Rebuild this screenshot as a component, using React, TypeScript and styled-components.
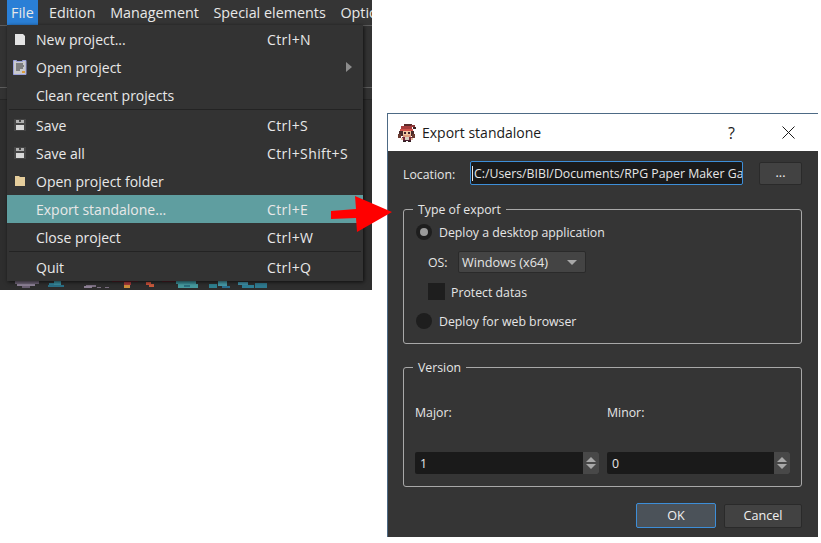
import * as React from "react";
import styled, { createGlobalStyle } from "styled-components";

const GlobalStyle = createGlobalStyle`
  html, body {
    margin: 0;
    padding: 0;
    background: #ffffff;
  }
  body {
    font-family: "Open Sans", "Noto Sans", sans-serif;
    font-size: 13.5px;
    color: #e6e6e6;
  }
`;

const menuBarItems = ["File", "Edition", "Management", "Special elements", "Options"];

type MenuEntry = {
  label?: string;
  shortcut?: string;
  icon?: "new" | "open" | "save" | "folder";
  submenu?: boolean;
  active?: boolean;
  separator?: boolean;
};

const menuEntries: MenuEntry[] = [
  { label: "New project...", shortcut: "Ctrl+N", icon: "new" },
  { label: "Open project", icon: "open", submenu: true },
  { label: "Clean recent projects" },
  { separator: true },
  { label: "Save", shortcut: "Ctrl+S", icon: "save" },
  { label: "Save all", shortcut: "Ctrl+Shift+S", icon: "save" },
  { label: "Open project folder", icon: "folder" },
  { label: "Export standalone...", shortcut: "Ctrl+E", active: true },
  { label: "Close project", shortcut: "Ctrl+W" },
  { separator: true },
  { label: "Quit", shortcut: "Ctrl+Q" },
];

// blurred map tiles peeking out under the menu: [x, y, w, h, colour]
const tiles: [number, number, number, number, string][] = [
  [3, 0, 24, 3, "#6f6477"], [5, 3, 18, 2, "#8d8095"], [10, 5, 8, 2, "#6a5f72"],
  [37, 2, 6, 2, "#2f7f96"], [42, 0, 7, 5, "#3a8fa0"], [36, 4, 16, 2, "#2a6f86"],
  [74, 4, 10, 2, "#7a6e80"], [72, 5, 8, 2, "#8d8095"], [85, 6, 4, 1, "#7a6e80"],
  [93, 6, 4, 1, "#7a6e80"], [100, 0, 26, 1, "#4f1c24"], [112, 1, 7, 3, "#a8383a"],
  [112, 4, 6, 3, "#cf8f3c"], [134, 1, 5, 3, "#c9503a"], [137, 3, 5, 3, "#c85a3c"],
  [150, 0, 16, 1, "#4f1c24"], [164, 0, 20, 3, "#3b8f98"], [166, 3, 20, 4, "#469a9e"],
  [172, 4, 6, 2, "#2a6f7f"], [197, 3, 8, 4, "#2f7f8f"], [206, 0, 9, 5, "#469aa8"],
  [210, 5, 8, 2, "#2a6f8f"], [226, 1, 10, 3, "#3f8fa5"], [230, 4, 12, 3, "#2f7f96"],
  [243, 2, 12, 5, "#2f7a90"],
];

// little character used as the window icon: [x, y, w, h, colour]
const sprite: [number, number, number, number, string][] = [
  [6, 0, 8, 2, "#5a2a2a"], [13, 1, 4, 2, "#8a3a3a"], [15, 3, 3, 2, "#3a2020"],
  [3, 2, 11, 3, "#a83c3c"], [2, 5, 13, 2, "#d0524a"], [1, 7, 4, 5, "#4a2a2a"],
  [13, 7, 3, 5, "#4a2a2a"], [5, 7, 8, 4, "#f0c6a0"], [6, 8, 2, 2, "#40202a"],
  [10, 8, 2, 2, "#40202a"], [0, 10, 3, 4, "#6a3a30"], [14, 10, 3, 4, "#6a3a30"],
  [5, 11, 8, 2, "#e0a080"], [4, 13, 10, 3, "#7a2a3a"], [7, 13, 4, 3, "#d8d0c0"],
  [3, 14, 2, 2, "#e8c0a0"], [13, 14, 2, 2, "#e8c0a0"], [5, 16, 8, 1, "#4a2030"],
  [5, 17, 3, 1, "#302020"], [10, 17, 3, 1, "#302020"],
];

const MenuIcon: React.FC<{ name: MenuEntry["icon"] }> = ({ name }) => {
  if (name === "new") {
    return (
      <svg width="10" height="11" viewBox="0 0 10 11">
        <path d="M0 0h8l2 2v9H0z" fill="#e4e4e4" />
      </svg>
    );
  }
  if (name === "open") {
    return (
      <svg width="14" height="15" viewBox="0 0 14 15">
        <path d="M.5.5h3v1h6v-1h3.5v14H.5z" fill="#c9c9cc" stroke="#9aa0dc" />
        <path d="M3 4h7M3 6h8M3 8h7M3 10h4" stroke="#333" />
        <rect x="9" y="11" width="3" height="2" fill="#d99a3c" />
      </svg>
    );
  }
  if (name === "save") {
    return (
      <svg width="12" height="12" viewBox="0 0 12 12">
        <rect width="12" height="12" fill="#464646" />
        <rect x="2" y="1" width="8" height="3" fill="#b0b0b0" />
        <rect x="5" y="1" width="2" height="2" fill="#464646" />
        <rect x="2" y="6" width="8" height="5" fill="#d8d8d8" />
      </svg>
    );
  }
  if (name === "folder") {
    return (
      <svg width="10" height="10" viewBox="0 0 10 10">
        <path d="M0 0h4l1 1h5v9H0z" fill="#e5cd9b" />
      </svg>
    );
  }
  return null;
};

const App: React.FC = () => {
  return (
    <>
      <GlobalStyle />
      <Page>
        <EditorShot>
          <MenuBar>
            {menuBarItems.map((item, i) => (
              <MenuBarItem key={item} $open={i === 0}>
                {item}
              </MenuBarItem>
            ))}
          </MenuBar>
          <ToolStrip />
          <TabStrip />
          <MapArea>
            <svg width="260" height="9" viewBox="0 0 260 9">
              {tiles.map(([x, y, w, h, c], i) => (
                <rect key={i} x={x} y={y} width={w} height={h} fill={c} />
              ))}
            </svg>
          </MapArea>
          <FileMenu>
            {menuEntries.map((entry, i) =>
              entry.separator ? (
                <MenuSeparator key={i} />
              ) : (
                <MenuRow key={i} $active={entry.active}>
                  <IconCell>
                    <MenuIcon name={entry.icon} />
                  </IconCell>
                  <RowLabel>{entry.label}</RowLabel>
                  <Shortcut>{entry.shortcut}</Shortcut>
                  {entry.submenu && <SubmenuArrow />}
                </MenuRow>
              )
            )}
          </FileMenu>
        </EditorShot>

        <PointerArrow width="62" height="37" viewBox="0 0 62 37">
          <path d="M0 15 L25 13 L24 0 L61 16 L26 36 L25 22 L0 23 Z" fill="#ff0000" />
        </PointerArrow>

        <Dialog>
          <TitleBar>
            <svg width="18" height="18" viewBox="0 0 18 18">
              {sprite.map(([x, y, w, h, c], i) => (
                <rect key={i} x={x} y={y} width={w} height={h} fill={c} />
              ))}
            </svg>
            <TitleText>Export standalone</TitleText>
            <HelpMark>?</HelpMark>
            <svg width="13" height="13" viewBox="0 0 13 13">
              <path d="M.5.5l12 12M12.5.5l-12 12" stroke="#1a1a1a" fill="none" />
            </svg>
          </TitleBar>
          <DialogBody>
            <LocationRow>
              <LocationLabel>Location:</LocationLabel>
              <PathField>
                <Caret />
                C:/Users/BIBI/Documents/RPG Paper Maker Ga
              </PathField>
              <PushButton $w={43} $h={23}>
                ...
              </PushButton>
            </LocationRow>

            <Group $h={135} $mt={24}>
              <GroupTitle>Type of export</GroupTitle>
              <OptionRow $mt={13}>
                <Radio $checked />
                <span>Deploy a desktop application</span>
              </OptionRow>
              <OsRow>
                <OsLabel>OS:</OsLabel>
                <SelectBox>
                  Windows (x64)
                  <SelectCaret />
                </SelectBox>
              </OsRow>
              <CheckRow>
                <CheckBox />
                <CheckLabel>Protect datas</CheckLabel>
              </CheckRow>
              <OptionRow $mt={12}>
                <Radio />
                <span>Deploy for web browser</span>
              </OptionRow>
            </Group>

            <Group $h={120} $mt={23}>
              <GroupTitle>Version</GroupTitle>
              <VersionGrid>
                <VersionColumn>
                  <span>Major:</span>
                  <SpinBox>
                    <SpinValue>1</SpinValue>
                    <SpinButtons>
                      <SpinUp />
                      <SpinDown />
                    </SpinButtons>
                  </SpinBox>
                </VersionColumn>
                <VersionColumn>
                  <span>Minor:</span>
                  <SpinBox>
                    <SpinValue>0</SpinValue>
                    <SpinButtons>
                      <SpinUp />
                      <SpinDown />
                    </SpinButtons>
                  </SpinBox>
                </VersionColumn>
              </VersionGrid>
            </Group>

            <ButtonRow>
              <PushButton $w={80} $h={25} $primary>
                OK
              </PushButton>
              <PushButton $w={78} $h={24}>
                Cancel
              </PushButton>
            </ButtonRow>
          </DialogBody>
        </Dialog>
      </Page>
    </>
  );
};

const Page = styled.div`
  position: relative;
  display: flex;
  align-items: flex-start;
  gap: 15px;
  width: 821px;
  height: 543px;
  overflow: hidden;
`;

const EditorShot = styled.div`
  position: relative;
  display: flex;
  flex-direction: column;
  flex: none;
  width: 372px;
  height: 290px;
  background: #333333;
  overflow: hidden;
`;

const MenuBar = styled.div`
  display: flex;
  flex: none;
  height: 25px;
  padding-left: 7px;
  background: #353535;
  white-space: nowrap;
`;

const MenuBarItem = styled.div<{ $open?: boolean }>`
  display: flex;
  align-items: center;
  padding: 0 ${(p) => (p.$open ? "4px" : "7.3px")};
  margin-right: ${(p) => (p.$open ? "4px" : "0")};
  background: ${(p) => (p.$open ? "#2a7fd6" : "transparent")};
  color: #e8e8e8;
  font-size: 14.35px;
`;

const ToolStrip = styled.div`
  flex: none;
  height: 61px;
  background: #333333;
  border-top: 1px solid #5c5c5c;
  border-bottom: 1px solid #5c5c5c;
`;

const TabStrip = styled.div`
  flex: none;
  height: 11px;
  background: #333333;
  border-bottom: 1px solid #262626;
`;

const MapArea = styled.div`
  display: flex;
  flex: 1;
  align-items: flex-end;
  padding-left: 12px;
  background: #2e2e2e;
`;

const FileMenu = styled.div`
  position: absolute;
  left: 7px;
  top: 25px;
  width: 356px;
  background: #333333;
  box-shadow: 1px 1px 4px rgba(0, 0, 0, 0.7);
`;

const MenuRow = styled.div<{ $active?: boolean }>`
  position: relative;
  display: grid;
  grid-template-columns: 29px 231px 1fr;
  align-items: center;
  height: 28px;
  background: ${(p) => (p.$active ? "#5f9ea0" : "transparent")};
  font-size: 14px;
  color: #e8e8e8;
`;

const IconCell = styled.div`
  display: flex;
  align-items: center;
  justify-content: center;
  width: 16px;
  height: 28px;
  margin-left: 5px;
`;

const RowLabel = styled.span`
  white-space: nowrap;
`;

const Shortcut = styled.span`
  letter-spacing: 0.4px;
  white-space: nowrap;
`;

const SubmenuArrow = styled.i`
  position: absolute;
  right: 11px;
  top: 9px;
  border-left: 6px solid #8c8c8c;
  border-top: 5px solid transparent;
  border-bottom: 5px solid transparent;
`;

const MenuSeparator = styled.div`
  height: 1px;
  margin: 0 2px 1px;
  background: #232323;
`;

const PointerArrow = styled.svg`
  position: absolute;
  left: 331px;
  top: 196px;
`;

const Dialog = styled.div`
  display: flex;
  flex-direction: column;
  flex: none;
  width: 431px;
  height: 424px;
  margin-top: 113px;
  background: #353535;
  border-left: 1px solid #4d6a85;
  border-top: 1px solid #4d6a85;
  box-sizing: border-box;
`;

const TitleBar = styled.div`
  display: flex;
  align-items: center;
  flex: none;
  height: 37px;
  padding: 0 23px 0 10px;
  background: #ffffff;
  color: #1a1a1a;
`;

const TitleText = styled.span`
  flex: 1;
  margin-left: 6px;
  font-size: 14px;
`;

const HelpMark = styled.span`
  margin-right: 47px;
  font-size: 16px;
`;

const DialogBody = styled.div`
  display: flex;
  flex-direction: column;
  flex: 1;
  padding: 10px 16px 0 15px;
  font-size: 12.3px;
`;

const LocationRow = styled.div`
  display: flex;
  align-items: center;
  height: 24px;
`;

const LocationLabel = styled.span`
  width: 67px;
  padding-top: 2px;
`;

const PathField = styled.div`
  display: flex;
  align-items: center;
  box-sizing: border-box;
  width: 273px;
  height: 24px;
  margin-right: 16px;
  padding-left: 1px;
  background: #1a1a1a;
  border: 1px solid #3d8ed8;
  border-radius: 2px;
  white-space: nowrap;
  overflow: hidden;
  font-size: 12.3px;
`;

const Caret = styled.i`
  flex: none;
  width: 1px;
  height: 15px;
  margin-right: 1px;
  background: #e6e6e6;
`;

const PushButton = styled.div<{ $w: number; $h: number; $primary?: boolean }>`
  display: flex;
  align-items: center;
  justify-content: center;
  box-sizing: border-box;
  width: ${(p) => p.$w}px;
  height: ${(p) => p.$h}px;
  padding-bottom: 1px;
  background: ${(p) => (p.$primary ? "#4b5259" : "#424242")};
  border: 1px solid ${(p) => (p.$primary ? "#3d8ed8" : "#2a2a2a")};
  border-radius: 2px;
  color: #f0f0f0;
  font-size: 12.6px;
`;

const Group = styled.div<{ $h: number; $mt: number }>`
  position: relative;
  box-sizing: border-box;
  height: ${(p) => p.$h}px;
  margin-top: ${(p) => p.$mt}px;
  border: 1px solid #a8a8a8;
  border-radius: 3px;
`;

const GroupTitle = styled.span`
  position: absolute;
  left: 9px;
  top: -9px;
  padding: 0 5px;
  background: #353535;
  line-height: 18px;
`;

const OptionRow = styled.div<{ $mt: number }>`
  display: flex;
  align-items: center;
  gap: 7px;
  height: 18px;
  margin: ${(p) => p.$mt}px 0 0 12px;
`;

const Radio = styled.i<{ $checked?: boolean }>`
  display: flex;
  align-items: center;
  justify-content: center;
  flex: none;
  width: 16px;
  height: 16px;
  border-radius: 50%;
  background: #1e1e1e;
  &::after {
    content: "";
    display: ${(p) => (p.$checked ? "block" : "none")};
    width: 8px;
    height: 8px;
    border-radius: 50%;
    background: #9a9a9a;
  }
`;

const OsRow = styled.div`
  display: flex;
  align-items: center;
  height: 22px;
  margin: 10px 0 0 24px;
`;

const OsLabel = styled.span`
  width: 30px;
`;

const SelectBox = styled.div`
  position: relative;
  box-sizing: border-box;
  width: 128px;
  height: 22px;
  padding-left: 3px;
  line-height: 20px;
  font-size: 12.7px;
  background: #444444;
  border: 1px solid #2a2a2a;
  border-radius: 2px;
`;

const SelectCaret = styled.i`
  position: absolute;
  right: 8px;
  top: 8px;
  border-top: 5px solid #a8a8a8;
  border-left: 5px solid transparent;
  border-right: 5px solid transparent;
`;

const CheckRow = styled.div`
  display: flex;
  align-items: center;
  gap: 6px;
  height: 17px;
  margin: 10px 0 0 24px;
`;

const CheckLabel = styled.span`
  padding-top: 1px;
`;

const CheckBox = styled.i`
  flex: none;
  width: 17px;
  height: 17px;
  background: #1e1e1e;
`;

const VersionGrid = styled.div`
  display: grid;
  grid-template-columns: 184px 183px;
  gap: 8px;
  padding: 36px 0 0 11px;
`;

const VersionColumn = styled.div`
  display: flex;
  flex-direction: column;
  gap: 30px;
  line-height: 18px;
`;

const SpinBox = styled.div`
  display: flex;
  align-items: stretch;
  height: 22px;
  background: #1a1a1a;
  border-radius: 2px;
`;

const SpinValue = styled.span`
  flex: 1;
  padding-left: 5px;
  line-height: 24px;
`;

const SpinButtons = styled.div`
  display: flex;
  flex-direction: column;
  align-items: center;
  justify-content: center;
  gap: 2px;
  width: 16px;
  background: #484848;
  border-radius: 0 2px 2px 0;
`;

const SpinUp = styled.i`
  border-bottom: 5px solid #a8a8a8;
  border-left: 5px solid transparent;
  border-right: 5px solid transparent;
`;

const SpinDown = styled.i`
  border-top: 5px solid #a8a8a8;
  border-left: 5px solid transparent;
  border-right: 5px solid transparent;
`;

const ButtonRow = styled.div`
  display: flex;
  justify-content: flex-end;
  align-items: flex-end;
  gap: 8px;
  margin-top: 16px;
  height: 25px;
`;

export default App;
